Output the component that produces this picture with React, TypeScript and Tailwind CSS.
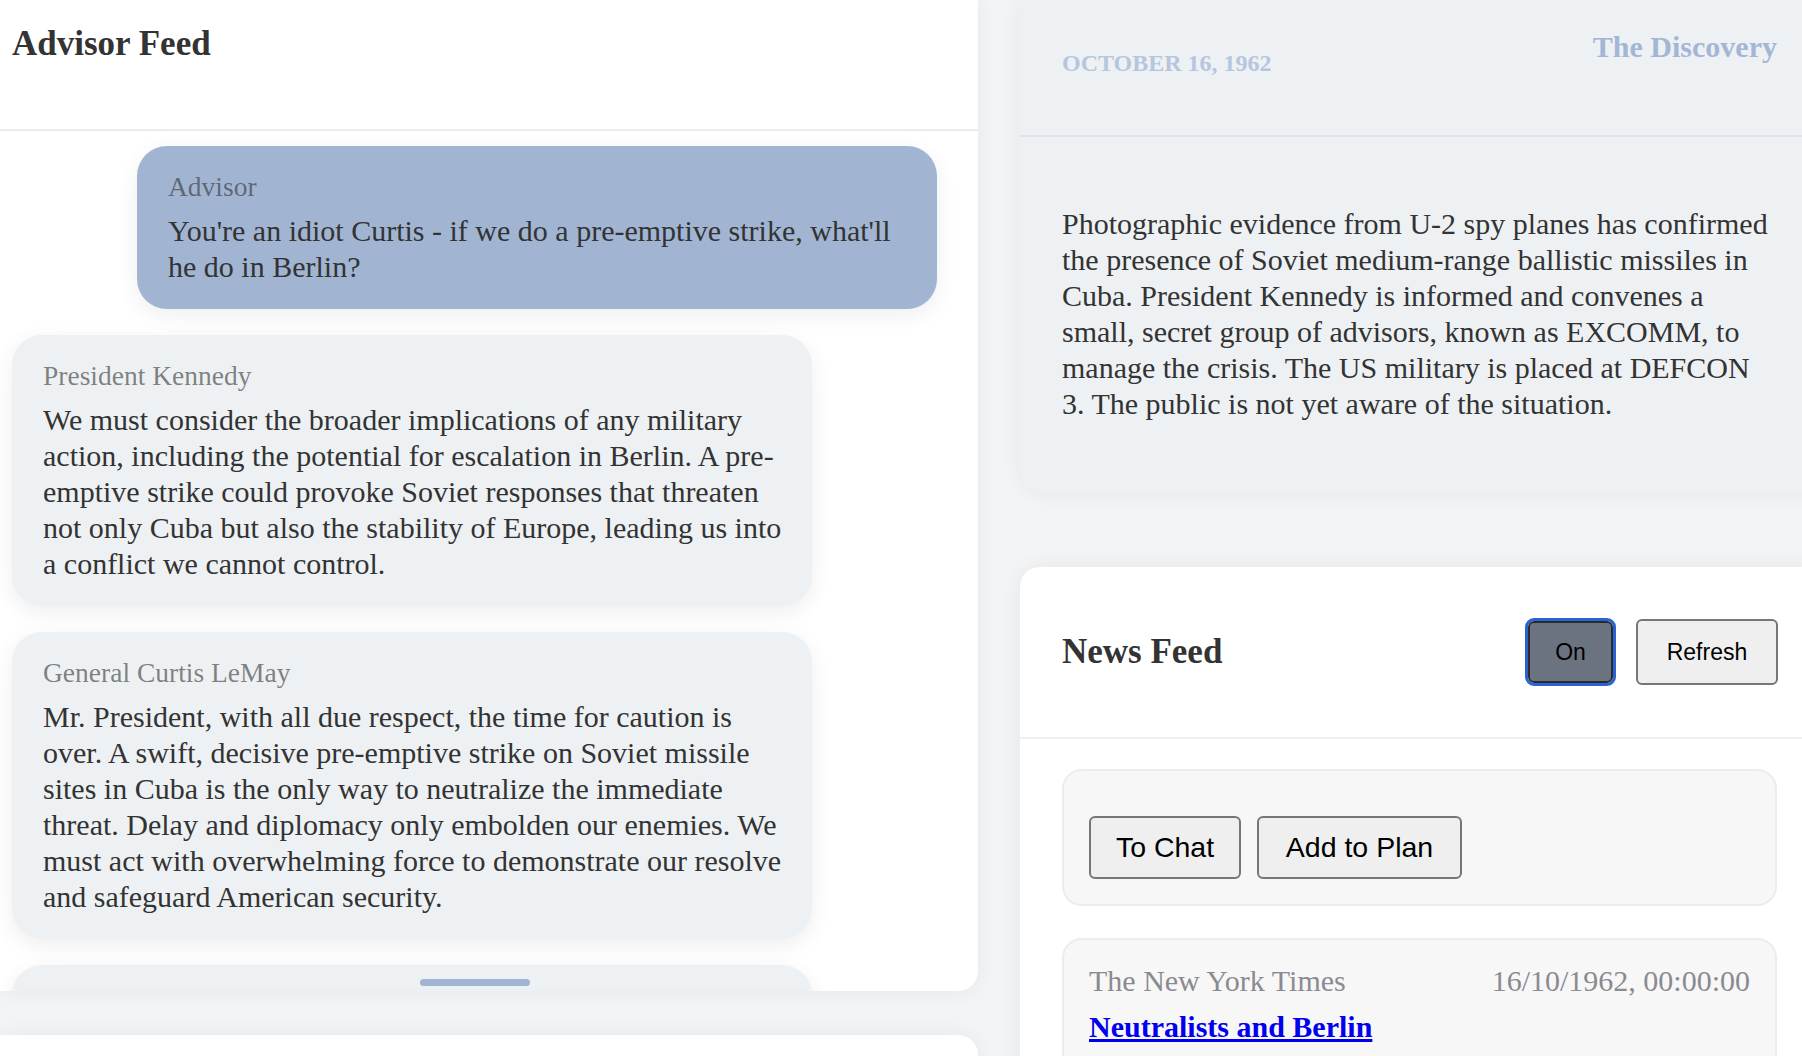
import React from "react";

type Msg = { who: string; text: string; mine?: boolean };

const messages: Msg[] = [
  {
    who: "Advisor",
    text: "You're an idiot Curtis - if we do a pre-emptive strike, what'll he do in Berlin?",
    mine: true,
  },
  {
    who: "President Kennedy",
    text: "We must consider the broader implications of any military action, including the potential for escalation in Berlin. A pre-emptive strike could provoke Soviet responses that threaten not only Cuba but also the stability of Europe, leading us into a conflict we cannot control.",
  },
  {
    who: "General Curtis LeMay",
    text: "Mr. President, with all due respect, the time for caution is over. A swift, decisive pre-emptive strike on Soviet missile sites in Cuba is the only way to neutralize the immediate threat. Delay and diplomacy only embolden our enemies. We must act with overwhelming force to demonstrate our resolve and safeguard American security.",
  },
];

function Bubble({ m }: { m: Msg }) {
  return (
    <div
      className={
        "w-[800px] shrink-0 rounded-[30px] pl-[31px] pr-[28px] pt-[25px] pb-[24px] shadow-[0_6px_22px_rgba(0,0,0,0.07)] " +
        (m.mine ? "self-end bg-[#a1b5d3]" : "self-start bg-[#eef1f4]")
      }
    >
      <div className="text-[27.5px] leading-[32px] text-[#333333]/60">{m.who}</div>
      <div className="mt-[10px] text-[30px] leading-[36px] text-[#333333]">{m.text}</div>
    </div>
  );
}

export default function App() {
  return (
    <div className="w-[1802px] h-[1056px] overflow-hidden bg-[#f3f4f6] font-['Liberation_Serif',serif]">
      <div className="flex items-start gap-[42px]">
        {/* Left column */}
        <div className="w-[978px] shrink-0 flex flex-col gap-[44px]">
          <section className="relative h-[991px] bg-white rounded-br-[20px] shadow-[0_0_22px_rgba(0,0,0,0.06)] flex flex-col overflow-hidden">
            <header className="h-[131px] shrink-0 border-b-2 border-[#ececec] px-[12px] pt-[24px]">
              <h2 className="text-[35px] leading-[40px] font-bold text-[#333333]">Advisor Feed</h2>
            </header>
            <div className="flex-1 overflow-hidden pl-[12px] pr-[41px] pt-[15px] flex flex-col gap-[26px]">
              {messages.map((m, i) => (
                <Bubble key={i} m={m} />
              ))}
              <div className="w-[800px] h-[200px] shrink-0 rounded-[30px] bg-[#eef1f4] shadow-[0_6px_22px_rgba(0,0,0,0.07)]" />
            </div>
            <div className="absolute left-[420px] top-[979px] w-[110px] h-[7px] rounded-full bg-[#a1b5d3]" />
          </section>
          <section className="h-[200px] bg-white rounded-tr-[20px] shadow-[0_0_22px_rgba(0,0,0,0.06)]" />
        </div>

        {/* Right column */}
        <div className="w-[799px] shrink-0 flex flex-col gap-[74px]">
          <section className="h-[493px] bg-[#eef1f4] rounded-bl-[24px] shadow-[0_0_22px_rgba(0,0,0,0.06)] flex flex-col">
            <header className="h-[137px] shrink-0 border-b-2 border-[#e1e5ea] pl-[42px] pr-[42px] pt-[29px] flex items-start justify-between">
              <div className="mt-[20px] text-[24px] leading-[28px] font-bold uppercase text-[#b6c6de]">October 16, 1962</div>
              <h3 className="text-[30px] leading-[36px] font-bold text-[#a3b7d5]">The Discovery</h3>
            </header>
            <p className="pl-[42px] pr-[47px] pt-[69px] text-[30px] leading-[36px] text-[#333333]">
              Photographic evidence from U-2 spy planes has confirmed the presence of Soviet medium-range ballistic missiles in Cuba. President Kennedy is informed and convenes a small, secret group of advisors, known as EXCOMM, to manage the crisis. The US military is placed at DEFCON 3. The public is not yet aware of the situation.
            </p>
          </section>

          <section className="bg-white rounded-tl-[20px] shadow-[0_0_22px_rgba(0,0,0,0.06)] h-[600px]">
            <header className="h-[172px] border-b-2 border-[#f0f0f0] px-[42px] flex items-center justify-between">
              <h2 className="text-[35px] leading-[40px] font-bold text-[#333333]">News Feed</h2>
              <div className="flex items-center gap-[23px] font-['Liberation_Sans',Arial,sans-serif] text-[23px] text-black">
                <button className="w-[85px] h-[62px] rounded-[6px] border-2 border-[#2b2b2b] bg-[#6b7280] outline-[3px] outline-solid outline-[#2a62d4]">
                  On
                </button>
                <button className="w-[142px] h-[66px] rounded-[6px] border-2 border-[#767676] bg-[#efefef] -mr-[1px]">
                  Refresh
                </button>
              </div>
            </header>
            <div className="px-[42px] pt-[30px] flex flex-col gap-[32px]">
              <div className="h-[137px] rounded-[20px] border-2 border-[#ececec] bg-[#f8f7f8] pl-[25px] pt-[45px]">
                <div className="flex gap-[16px] font-['Liberation_Sans',Arial,sans-serif] text-[28.5px] text-black">
                  <button className="w-[152px] h-[63px] rounded-[6px] border-2 border-[#767676] bg-[#efefef]">To Chat</button>
                  <button className="w-[205px] h-[63px] rounded-[6px] border-2 border-[#767676] bg-[#efefef]">Add to Plan</button>
                </div>
              </div>
              <div className="h-[200px] rounded-[20px] border-2 border-[#ececec] bg-[#f8f7f8] px-[25px] pt-[24px]">
                <div className="flex justify-between text-[30px] leading-[34px] text-[#8a8b90]">
                  <span>The New York Times</span>
                  <span>16/10/1962, 00:00:00</span>
                </div>
                <a href="#" className="block mt-[11px] text-[30px] leading-[36px] font-bold text-[#0000ee] underline">
                  Neutralists and Berlin
                </a>
              </div>
            </div>
          </section>
        </div>
      </div>
    </div>
  );
}
